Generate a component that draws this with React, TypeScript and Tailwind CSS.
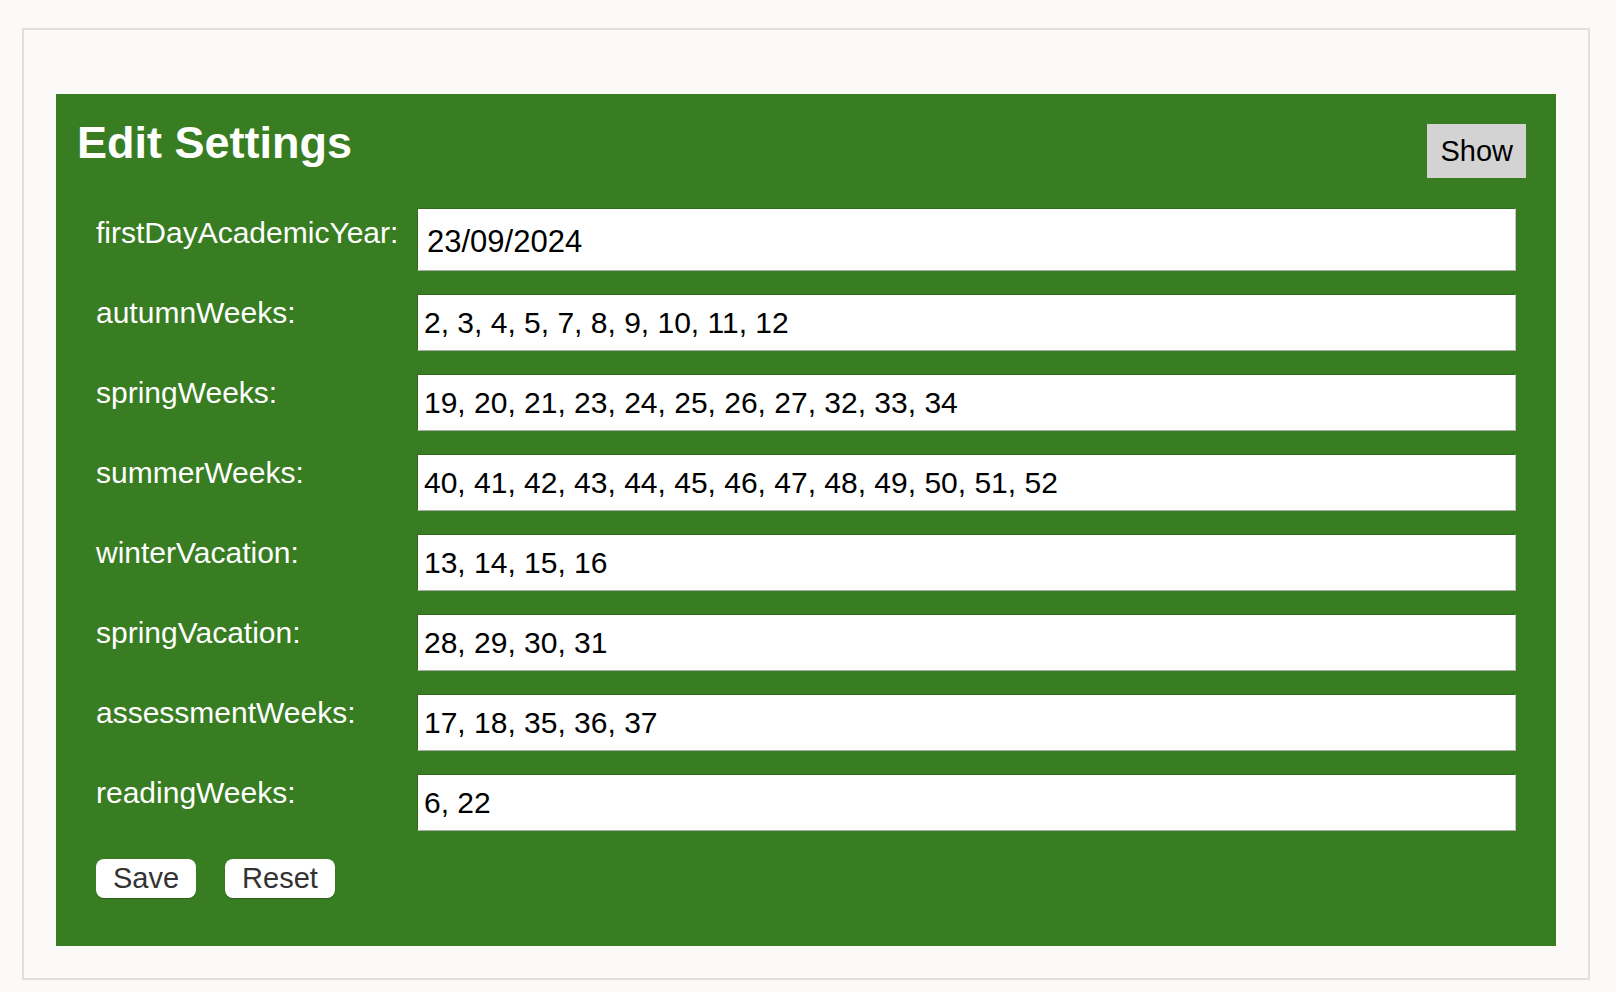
import { useState } from "react";

type Setting = {
  key: string;
  value: string;
};

const initialSettings: Setting[] = [
  { key: "firstDayAcademicYear", value: "23/09/2024" },
  { key: "autumnWeeks", value: "2, 3, 4, 5, 7, 8, 9, 10, 11, 12" },
  { key: "springWeeks", value: "19, 20, 21, 23, 24, 25, 26, 27, 32, 33, 34" },
  { key: "summerWeeks", value: "40, 41, 42, 43, 44, 45, 46, 47, 48, 49, 50, 51, 52" },
  { key: "winterVacation", value: "13, 14, 15, 16" },
  { key: "springVacation", value: "28, 29, 30, 31" },
  { key: "assessmentWeeks", value: "17, 18, 35, 36, 37" },
  { key: "readingWeeks", value: "6, 22" },
];

export default function App() {
  const [settings, setSettings] = useState<Setting[]>(initialSettings);

  const handleChange = (key: string, value: string) => {
    setSettings((prev) => prev.map((s) => (s.key === key ? { ...s, value } : s)));
  };

  const handleReset = () => {
    setSettings(initialSettings);
  };

  return (
    <div className="min-h-[992px] bg-[#fbfaf8] pt-[28px] font-['Liberation_Sans',Arial,sans-serif]">
      <div className="ml-[22px] w-[1568px] h-[952px] border-2 border-[#e0dfdc] bg-[#fbfaf8] px-[32px] pt-[64px] pb-[32px]">
        <section className="bg-[#387d22] pt-[23px] pb-[48px]">
          <div className="flex items-start justify-between pl-[21px] pr-[30px]">
            <h1 className="text-[45px] leading-[51px] font-bold text-white">Edit Settings</h1>
            <button className="mt-[7px] h-[54px] px-[13px] bg-[#d3d3d3] text-[29px] leading-none text-black">
              Show
            </button>
          </div>

          <form className="mt-[30px] px-[40px]" onSubmit={(e) => e.preventDefault()}>
            <div className="flex flex-col gap-[23px]">
              {settings.map((s, i) => {
                const isFirst = i === 0;
                return (
                  <div key={s.key} className="grid grid-cols-[321px_1099px] items-start">
                    <label
                      htmlFor={s.key}
                      className={`text-[30px] leading-[34px] text-white ${isFirst ? "pt-[8px]" : "pt-[2px]"}`}
                    >
                      {s.key}:
                    </label>
                    <input
                      id={s.key}
                      type="text"
                      value={s.value}
                      onChange={(e) => handleChange(s.key, e.target.value)}
                      className={`w-full bg-white text-black outline-none border border-t-[#2f6a1d] border-l-[#2f6a1d] border-b-[#a9a9a9] border-r-[#c4c4c4] ${
                        isFirst ? "h-[63px] pl-[9px] pt-[4px] text-[31px]" : "h-[57px] pl-[6px] text-[30px]"
                      }`}
                    />
                  </div>
                );
              })}
            </div>

            <div className="mt-[28px] flex gap-[29px]">
              <button
                type="submit"
                className="h-[39px] w-[100px] rounded-[8px] bg-white text-[29px] leading-none text-[#333] shadow-[0_1px_1px_rgba(0,0,0,0.25)]"
              >
                Save
              </button>
              <button
                type="button"
                onClick={handleReset}
                className="h-[39px] w-[110px] rounded-[8px] bg-white text-[29px] leading-none text-[#333] shadow-[0_1px_1px_rgba(0,0,0,0.25)]"
              >
                Reset
              </button>
            </div>
          </form>
        </section>
      </div>
    </div>
  );
}
